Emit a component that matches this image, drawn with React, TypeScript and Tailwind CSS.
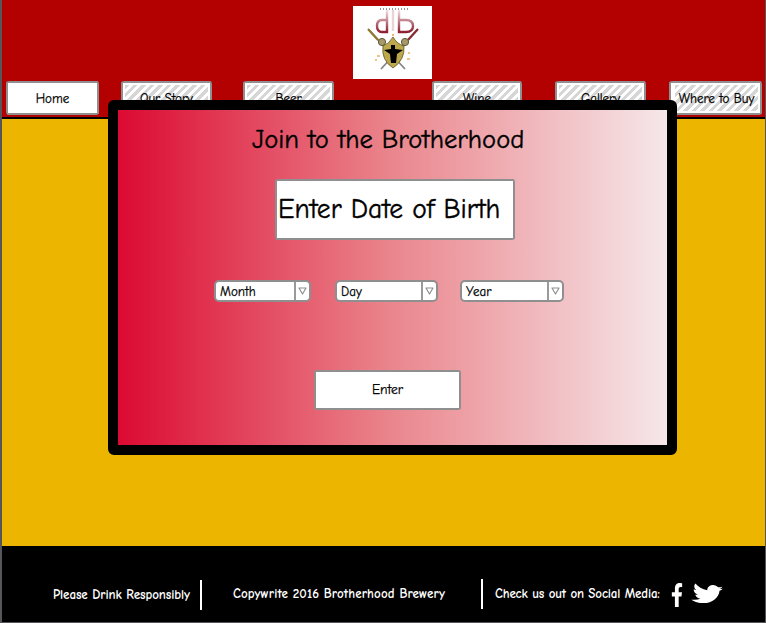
import { FaFacebookF, FaTwitter } from "react-icons/fa";

const sketchy = "border-2 border-[#8f8f8f] rounded-[4px_2px_5px_2px/2px_4px_2px_5px] bg-white";

function NavButton({ label, active, className }: { label: string; active?: boolean; className: string }) {
    return (
        <div className={`${sketchy} p-[2px] h-[34px] shrink-0 ${className}`}>
            <div
                className={`w-full h-full flex items-center justify-center pt-[1px] text-[13px] text-black [-webkit-text-stroke:0.25px_black] whitespace-nowrap ${
                    active ? "" : "bg-[repeating-linear-gradient(135deg,#d6d6d6_0,#d6d6d6_3px,#ffffff_3px,#ffffff_6px)]"
                }`}
            >
                {label}
            </div>
        </div>
    );
}

function DateSelect({ label, className }: { label: string; className: string }) {
    return (
        <div className={`${sketchy} rounded-[5px] h-[22px] flex items-stretch ${className}`}>
            <span className="flex-1 pl-[4px] text-[13px] leading-[20px] text-black [-webkit-text-stroke:0.25px_black]">{label}</span>
            <span className="w-[15px] border-l-2 border-[#9a9a9a] flex items-center justify-center">
                <svg width="9" height="8" viewBox="0 0 9 8">
                    <path d="M1 1 H8 L4.5 7 Z" fill="#fff" stroke="#8f8f8f" strokeWidth="1.2" strokeLinejoin="round" />
                </svg>
            </span>
        </div>
    );
}

function Logo() {
    return (
        <svg width="79" height="73" viewBox="0 0 79 73">
            <defs>
                <linearGradient id="fade" x1="0" y1="0" x2="0" y2="1">
                    <stop offset="0" stopColor="#f3e4e6" />
                    <stop offset="1" stopColor="#8e1f30" />
                </linearGradient>
            </defs>
            {/* initials */}
            <g fill="none" stroke="url(#fade)" strokeWidth="2.4">
                <path d="M34 14 H29 Q24 14 24 20 Q24 26 29 26 H34 V4" />
                <path d="M46 4 V26 H53 Q60 26 60 20 Q60 14 53 14 H46" />
            </g>
            <path d="M27 3 H55" stroke="#333" strokeWidth="1" strokeDasharray="1 2" />
            <path d="M40 4 V25" stroke="#e9d3d6" strokeWidth="2.4" />
            {/* swords */}
            <path d="M16 24 L52 63" stroke="#858585" strokeWidth="1.8" />
            <path d="M64 24 L28 63" stroke="#858585" strokeWidth="1.8" />
            <path d="M15 23 L25 34" stroke="#8f7a2c" strokeWidth="2.2" />
            <path d="M65 23 L55 34" stroke="#8b2b33" strokeWidth="2.2" />
            <circle cx="29" cy="36" r="3.6" fill="#a89a68" stroke="#5c5636" />
            <circle cx="52" cy="36" r="3.6" fill="#a89a68" stroke="#5c5636" />
            {/* shield */}
            <path d="M30 40 Q36 38 40 31 Q44 38 51 40 Q52 54 40 62 Q28 54 30 40 Z" fill="#bda84c" stroke="#5e5426" strokeWidth="0.8" />
            <path d="M31 44 L38 43 L38 39 L42 39 L42 43 L50 44 L44 48 L43 57 L38 57 L37 48 Z" fill="#000" />
            <path d="M24 50 h3 M22 54 h2 M55 47 h2 M54 53 h3 M40 28 v2" stroke="#e08a10" strokeWidth="1.2" />
        </svg>
    );
}

export default function App() {
    return (
        <div className="relative w-[766px] h-[623px] overflow-hidden bg-[#55555a] pl-[2px] pr-[1px] pb-[1px] flex flex-col font-['Comic_Sans_MS','Comic_Neue','Open_Sans',sans-serif]">
            <header className="h-[119px] shrink-0 bg-[#b30000] border-b-2 border-black">
                <div className="ml-[351px] pt-[6px] w-[79px]">
                    <div className="w-[79px] h-[73px] bg-white">
                        <Logo />
                    </div>
                </div>
                <nav className="flex mt-[2px] pl-[4px]">
                    <NavButton label="Home" active className="w-[93px]" />
                    <NavButton label="Our Story" className="w-[91px] ml-[22px]" />
                    <NavButton label="Beer" className="w-[91px] ml-[31px]" />
                    <NavButton label="Wine" className="w-[90px] ml-[98px]" />
                    <NavButton label="Gallery" className="w-[91px] ml-[33px]" />
                    <NavButton label="Where to Buy" className="w-[93px] ml-[23px] pl-[4px]" />
                </nav>
            </header>

            <main className="flex-1 bg-[#ecb500]" />

            <footer className="h-[76px] shrink-0 bg-black flex items-start pt-[34px] text-white text-[13px] font-bold">
                <span className="ml-[51px] w-[139px] mt-[5px] whitespace-nowrap tracking-[-0.08px]">Please Drink Responsibly</span>
                <span className="ml-[8px] w-[2px] h-[30px] bg-white" />
                <span className="ml-[31px] w-[214px] mt-[4px] whitespace-nowrap tracking-[0.12px]">Copywrite 2016 Brotherhood Brewery</span>
                <span className="ml-[34px] w-[2px] h-[30px] -mt-[1px] bg-white" />
                <span className="ml-[12px] w-[166px] mt-[4px] whitespace-nowrap tracking-[-0.15px]">Check us out on Social Media:</span>
                <FaFacebookF preserveAspectRatio="none" className="ml-[10px] mt-[3px] w-[12px] h-[24px]" />
                <FaTwitter preserveAspectRatio="none" className="ml-[9px] mt-[2px] w-[30px] h-[24px] rotate-[8deg]" />
            </footer>

            <section className="absolute left-[108px] top-[100px] w-[569px] h-[355px] border-[10px] border-black rounded-[6px] bg-linear-to-r/srgb from-[#dc0a32] via-[#ea868d] to-[#f6e7e9] flex flex-col">
                <h1 className="ml-[134px] mt-[12px] h-[36px] text-[26.6px] leading-[36px] text-black whitespace-nowrap [-webkit-text-stroke:0.4px_black]">
                    Join to the Brotherhood
                </h1>
                <div className={`${sketchy} ml-[157px] mt-[21px] w-[240px] h-[61px] flex items-center pl-[1px] text-[27.5px] text-black whitespace-nowrap [-webkit-text-stroke:0.4px_black]`}>
                    Enter Date of Birth
                </div>
                <div className="flex ml-[96px] mt-[40px]">
                    <DateSelect label="Month" className="w-[97px]" />
                    <DateSelect label="Day" className="w-[103px] ml-[24px]" />
                    <DateSelect label="Year" className="w-[104px] ml-[22px]" />
                </div>
                <div className={`${sketchy} ml-[196px] mt-[68px] w-[147px] h-[40px] flex items-center justify-center text-[13.5px] text-black [-webkit-text-stroke:0.25px_black]`}>
                    Enter
                </div>
            </section>
        </div>
    );
}
